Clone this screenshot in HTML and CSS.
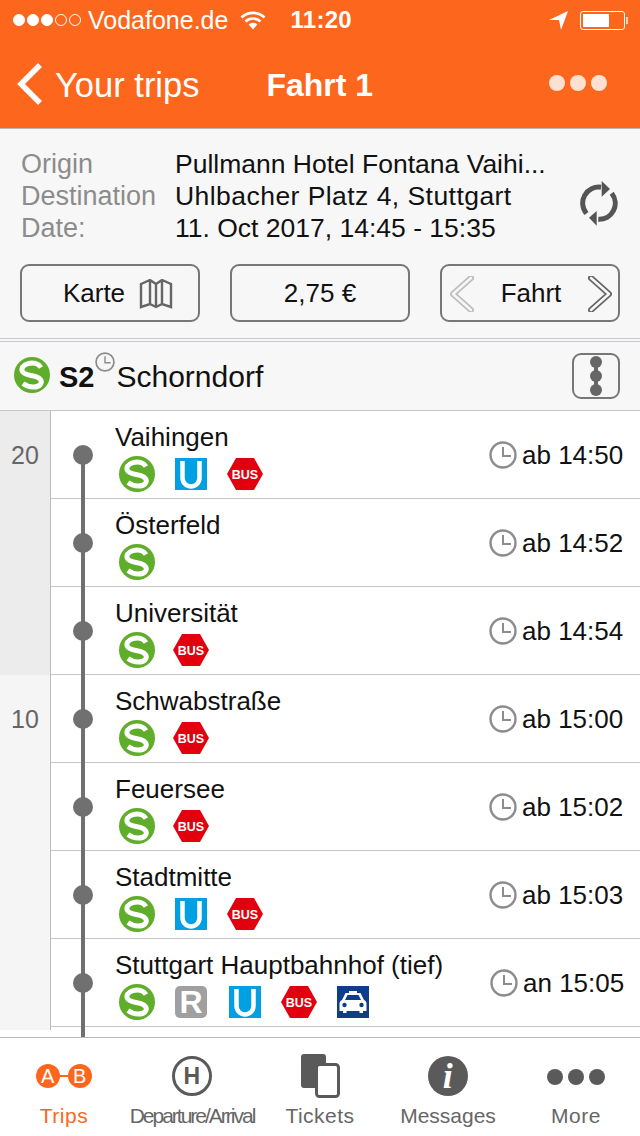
FILE: index.html
```html
<!DOCTYPE html>
<html lang="en">
<head>
    <meta charset="UTF-8">
    <meta name="viewport" content="width=device-width, initial-scale=1.0">
    <title>Fahrt 1</title>
    <link rel="stylesheet" href="styles.css">
</head>
<body>
    <svg class="defs" width="0" height="0">
        <symbol id="i-sbahn" viewBox="0 0 36 36">
            <circle cx="18" cy="18" r="18" fill="#5fad2a"/>
            <path d="M27 10.5C24.5 6.5 19 5.2 14 6.6C9 8 6.8 11.5 8.5 14.6C10.4 18 17 18 22 19.6C26.5 21 28.5 24 26.5 27.2C24 30.8 15.5 31.5 9 26.6" fill="none" stroke="#fff" stroke-width="5"/>
        </symbol>
        <symbol id="i-ubahn" viewBox="0 0 32 32">
            <rect width="32" height="32" fill="#00a0e3"/>
            <path d="M7.5 0V17a8.5 8.5 0 0 0 17 0V0" fill="none" stroke="#fff" stroke-width="4.5" transform="translate(0 3)"/>
        </symbol>
        <symbol id="i-bus" viewBox="0 0 36 32">
            <path d="M9 0H27L36 16L27 32H9L0 16Z" fill="#e2000f"/>
            <text x="18" y="21" class="bus-text">BUS</text>
        </symbol>
        <symbol id="i-rbahn" viewBox="0 0 32 32">
            <rect width="32" height="32" rx="5" fill="#a0a0a0"/>
            <text x="16" y="27" class="rail-text">R</text>
        </symbol>
        <symbol id="i-taxi" viewBox="0 0 32 32">
            <rect width="32" height="32" fill="#0f3d8c"/>
            <path d="M12 5H20V7H23.5L27 14C29 15 29.5 16 29.5 18V25H26V27H22.5V25H9.5V27H6V25H2.5V18C2.5 16 3 15 5 14L8.5 7H12Z" fill="#fff"/>
            <path d="M10.5 9H21.5L24 14H8Z" fill="#0f3d8c"/>
            <circle cx="7.5" cy="19" r="2.2" fill="#0f3d8c"/>
            <circle cx="24.5" cy="19" r="2.2" fill="#0f3d8c"/>
        </symbol>
        <symbol id="i-clock" viewBox="0 0 28 28">
            <circle cx="14" cy="14" r="12.5" fill="none" stroke="#8c8c8c" stroke-width="2.4"/>
            <path d="M14 6V15H22" fill="none" stroke="#8c8c8c" stroke-width="2"/>
        </symbol>
    </svg>

    <div class="page">
        <header class="topbar">
            <div class="status">
                <div class="signal">
                    <i class="on"></i><i class="on"></i><i class="on"></i><i></i><i></i>
                </div>
                <span class="carrier">Vodafone.de</span>
                <svg class="wifi" width="26" height="20" viewBox="0 0 26 20">
                    <path d="M1.5 7.5a16.5 16.5 0 0 1 23 0M5.5 11.500a11 11 0 0 1 15 0" fill="none" stroke="#fff" stroke-width="2.6"/>
                    <path d="M8.7 14.6a6 6 0 0 1 8.6 0L13 19.500Z" fill="#fff"/>
                </svg>
                <span class="clock-now">11:20</span>
                <svg class="arrow" width="19" height="19" viewBox="0 0 19 19">
                    <path d="M0 9L19 0L12 19L10 9Z" fill="#fff"/>
                </svg>
                <div class="battery"><div class="battery-fill"></div></div>
                <div class="battery-nub"></div>
            </div>
            <nav class="navbar">
                <svg class="back" width="27" height="44" viewBox="0 0 27 44">
                    <path d="M24 3L5 22L24 41" fill="none" stroke="#fff" stroke-width="5.5"/>
                </svg>
                <span class="back-label">Your trips</span>
                <span class="nav-title">Fahrt 1</span>
                <div class="nav-dots"><i></i><i></i><i></i></div>
            </nav>
        </header>

        <section class="summary">
            <div class="summary-top">
                <dl class="details">
                    <dt>Origin</dt>
                    <dd>Pullmann Hotel Fontana Vaihi...</dd>
                    <dt>Destination</dt>
                    <dd class="dd-wide">Uhlbacher Platz 4, Stuttgart</dd>
                    <dt>Date:</dt>
                    <dd>11. Oct 2017, 14:45 - 15:35</dd>
                </dl>
                <svg class="refresh" width="40" height="46" viewBox="0 0 40 46">
                    <path d="M6.500 32.500A16 16 0 0 1 21 6.300M31.700 12.300A16 16 0 0 1 18.300 38.300" fill="none" stroke="#555" stroke-width="5"/>
                    <path d="M21.700 0L30 8L21.700 15.700Z" fill="#555"/>
                    <path d="M16.700 30L9 36.700L16.700 44.700Z" fill="#555"/>
                </svg>
            </div>
            <div class="actions">
                <button class="btn btn-map">
                    <span>Karte</span>
                    <svg class="map" width="34" height="30" viewBox="0 0 34 30">
                        <path d="M2 5L11 1L17 5L23 1L32 5V28L23 25L17 28L11 25L2 28ZM11 1V25M17 5V28M23 1V25" fill="none" stroke="#666" stroke-width="2.400"/>
                    </svg>
                </button>
                <button class="btn">2,75 €</button>
                <button class="btn btn-pager">
                    <svg width="24" height="36" viewBox="0 0 24 36">
                        <path d="M21 2L3 18L21 34" fill="none" stroke="#bdbdbd" stroke-width="6" stroke-linejoin="round" stroke-linecap="round"/>
                        <path d="M21 2L3 18L21 34" fill="none" stroke="#f7f7f7" stroke-width="2.500" stroke-linejoin="round" stroke-linecap="round"/>
                    </svg>
                    <span>Fahrt</span>
                    <svg width="24" height="36" viewBox="0 0 24 36">
                        <path d="M3 2L21 18L3 34" fill="none" stroke="#666" stroke-width="6" stroke-linejoin="round" stroke-linecap="round"/>
                        <path d="M3 2L21 18L3 34" fill="none" stroke="#f7f7f7" stroke-width="2.500" stroke-linejoin="round" stroke-linecap="round"/>
                    </svg>
                </button>
            </div>
        </section>

        <section class="line-head">
            <svg class="line-badge" width="36" height="36"><use href="#i-sbahn"/></svg>
            <span class="line-name">S2</span>
            <svg class="line-clock" width="20" height="20"><use href="#i-clock"/></svg>
            <span class="line-dest">Schorndorf</span>
            <button class="stops-btn">
                <i></i><i></i><i></i>
            </button>
        </section>

        <main class="stops">
            <div class="stop">
                <div class="band band-dark"><span>20</span></div>
                <div class="track"><i></i></div>
                <div class="stop-info">
                    <div class="stop-name">Vaihingen</div>
                    <div class="modes">
                        <svg class="mode"><use href="#i-sbahn"/></svg>
                        <svg class="mode"><use href="#i-ubahn" width="32" height="32" x="2" y="2"/></svg>
                        <svg class="mode"><use href="#i-bus" y="2" height="32" width="36"/></svg>
                    </div>
                </div>
                <div class="time"><svg width="28" height="28"><use href="#i-clock"/></svg><span>ab 14:50</span></div>
            </div>
            <div class="stop">
                <div class="band band-dark"></div>
                <div class="track"><i></i></div>
                <div class="stop-info">
                    <div class="stop-name">Österfeld</div>
                    <div class="modes">
                        <svg class="mode"><use href="#i-sbahn"/></svg>
                    </div>
                </div>
                <div class="time"><svg width="28" height="28"><use href="#i-clock"/></svg><span>ab 14:52</span></div>
            </div>
            <div class="stop">
                <div class="band band-dark"></div>
                <div class="track"><i></i></div>
                <div class="stop-info">
                    <div class="stop-name">Universität</div>
                    <div class="modes">
                        <svg class="mode"><use href="#i-sbahn"/></svg>
                        <svg class="mode"><use href="#i-bus" y="2" height="32" width="36"/></svg>
                    </div>
                </div>
                <div class="time"><svg width="28" height="28"><use href="#i-clock"/></svg><span>ab 14:54</span></div>
            </div>
            <div class="stop">
                <div class="band"><span>10</span></div>
                <div class="track"><i></i></div>
                <div class="stop-info">
                    <div class="stop-name">Schwabstraße</div>
                    <div class="modes">
                        <svg class="mode"><use href="#i-sbahn"/></svg>
                        <svg class="mode"><use href="#i-bus" y="2" height="32" width="36"/></svg>
                    </div>
                </div>
                <div class="time"><svg width="28" height="28"><use href="#i-clock"/></svg><span>ab 15:00</span></div>
            </div>
            <div class="stop">
                <div class="band"></div>
                <div class="track"><i></i></div>
                <div class="stop-info">
                    <div class="stop-name">Feuersee</div>
                    <div class="modes">
                        <svg class="mode"><use href="#i-sbahn"/></svg>
                        <svg class="mode"><use href="#i-bus" y="2" height="32" width="36"/></svg>
                    </div>
                </div>
                <div class="time"><svg width="28" height="28"><use href="#i-clock"/></svg><span>ab 15:02</span></div>
            </div>
            <div class="stop">
                <div class="band"></div>
                <div class="track"><i></i></div>
                <div class="stop-info">
                    <div class="stop-name">Stadtmitte</div>
                    <div class="modes">
                        <svg class="mode"><use href="#i-sbahn"/></svg>
                        <svg class="mode"><use href="#i-ubahn" width="32" height="32" x="2" y="2"/></svg>
                        <svg class="mode"><use href="#i-bus" y="2" height="32" width="36"/></svg>
                    </div>
                </div>
                <div class="time"><svg width="28" height="28"><use href="#i-clock"/></svg><span>ab 15:03</span></div>
            </div>
            <div class="stop">
                <div class="band"></div>
                <div class="track"><i></i></div>
                <div class="stop-info">
                    <div class="stop-name">Stuttgart Hauptbahnhof (tief)</div>
                    <div class="modes">
                        <svg class="mode"><use href="#i-sbahn"/></svg>
                        <svg class="mode"><use href="#i-rbahn" width="32" height="32" x="2" y="2"/></svg>
                        <svg class="mode"><use href="#i-ubahn" width="32" height="32" x="2" y="2"/></svg>
                        <svg class="mode"><use href="#i-bus" y="2" height="32" width="36"/></svg>
                        <svg class="mode"><use href="#i-taxi" width="32" height="32" x="2" y="2"/></svg>
                    </div>
                </div>
                <div class="time time-arrive"><svg width="28" height="28"><use href="#i-clock"/></svg><span>an 15:05</span></div>
            </div>
            <div class="stop stop-tail">
                <div class="band band-tail"></div>
                <div class="track"></div>
            </div>
        </main>

        <footer class="tabs">
            <div class="tab tab-active">
                <svg width="60" height="40" viewBox="0 0 60 40">
                    <path d="M14 20H46" stroke="#fc671d" stroke-width="2"/>
                    <circle cx="14" cy="20" r="12" fill="#fc671d"/>
                    <circle cx="46" cy="20" r="12" fill="#fc671d"/>
                    <text x="14" y="27" class="ab-text">A</text>
                    <text x="46" y="27" class="ab-text">B</text>
                </svg>
                <span>Trips</span>
            </div>
            <div class="tab">
                <svg width="42" height="40" viewBox="0 0 42 40">
                    <circle cx="21" cy="20" r="18.500" fill="none" stroke="#5a5a5a" stroke-width="3"/>
                    <text x="21" y="28" class="h-text">H</text>
                </svg>
                <span class="tab-tight">Departure/Arrival</span>
            </div>
            <div class="tab">
                <svg class="tickets" width="40" height="44" viewBox="0 0 40 44">
                    <rect x="1" y="0" width="25" height="34" rx="3" fill="#5a5a5a"/>
                    <rect x="16.500" y="10.500" width="22" height="32" rx="3" fill="#fff" stroke="#5a5a5a" stroke-width="3"/>
                </svg>
                <span>Tickets</span>
            </div>
            <div class="tab">
                <svg width="40" height="40" viewBox="0 0 40 40">
                    <circle cx="20" cy="20" r="20" fill="#5a5a5a"/>
                    <text x="20" y="32" class="info-text">i</text>
                </svg>
                <span class="tab-snug">Messages</span>
            </div>
            <div class="tab">
                <div class="more-dots"><i></i><i></i><i></i></div>
                <span>More</span>
            </div>
        </footer>
    </div>
</body>
</html>
```

FILE: styles.css
```css
* {
    box-sizing: border-box;
}

body {
    margin: 0;
    font-family: "Liberation Sans", Arial, sans-serif;
    color: #111;
    background: #fff;
}

.defs {
    display: none;
}

.page {
    width: 640px;
    height: 1136px;
    display: flex;
    flex-direction: column;
    overflow: hidden;
}

/* Orange header */
.topbar {
    height: 129px;
    flex: none;
    background-color: #fc671d;
    border-bottom: 1px solid #b5b5b5;
    color: #fff;
}

.status {
    height: 40px;
    display: flex;
    align-items: center;
    padding-left: 13px;
    font-size: 24px;
}

.signal {
    display: flex;
    gap: 2px;
}

.signal i {
    width: 12px;
    height: 12px;
    border: 1px solid #fff;
    border-radius: 50%;
}

.signal i.on {
    background-color: #fff;
}

.carrier {
    margin-left: 7px;
    font-size: 25px;
}

.wifi {
    margin-left: 12px;
}

.clock-now {
    margin-left: 24px;
    font-size: 24px;
    font-weight: bold;
    letter-spacing: 0.3px;
}

.arrow {
    margin-left: 197px;
}

.battery {
    margin-left: 12px;
    width: 45px;
    height: 19px;
    padding: 2px;
    border: 1px solid #fff;
    border-radius: 3px;
}

.battery-fill {
    width: 26px;
    height: 100%;
    background-color: #fff;
}

.battery-nub {
    width: 2px;
    height: 7px;
    margin-left: 1px;
    background-color: #fff;
    opacity: 0.7;
}

.navbar {
    height: 88px;
    display: flex;
    align-items: center;
    padding-left: 16px;
}

.back-label {
    margin-left: 12px;
    font-size: 34.500px;
    margin-top: 2px;
}

.nav-title {
    margin-left: 67px;
    font-size: 32px;
    font-weight: bold;
    margin-top: 2px;
}

.nav-dots {
    margin-left: auto;
    margin-right: 33px;
    display: flex;
    gap: 5px;
    margin-top: -2px;
}

.nav-dots i {
    width: 16px;
    height: 16px;
    border-radius: 50%;
    background-color: #fff;
    opacity: 0.8;
}

/* Trip summary */
.summary {
    height: 213px;
    flex: none;
    padding: 19px 20px 0 21px;
    background-color: #f7f7f7;
    border-bottom: 4px double #c6c6cb;
}

.summary-top {
    display: flex;
    align-items: flex-start;
    justify-content: space-between;
}

.details {
    margin: 0;
    display: grid;
    grid-template-columns: 154px auto;
    font-size: 26.500px;
    line-height: 32px;
}

.details dt {
    font-size: 27px;
    color: #8c8c8c;
}

.details dd {
    margin: 0;
    color: #111;
}

.details .dd-wide {
    letter-spacing: 0.45px;
}

.refresh {
    margin-top: 33px;
}

.actions {
    margin-top: 20px;
    display: flex;
    justify-content: space-between;
    margin-left: -1px;
}

.btn {
    width: 180px;
    height: 58px;
    display: flex;
    align-items: center;
    justify-content: center;
    gap: 14px;
    padding: 1px 0 0;
    background: #f7f7f7;
    border: 2px solid #777;
    border-radius: 9px;
    font-family: inherit;
    font-size: 26px;
    color: #111;
}

.btn-map {
    padding-left: 16px;
}

.btn-pager {
    justify-content: space-between;
    padding: 1px 6px 0 8px;
}

/* Line heading */
.line-head {
    height: 69px;
    flex: none;
    display: flex;
    align-items: center;
    padding: 0 20px 0 14px;
    background-color: #f7f7f7;
    border-bottom: 1px solid #c6c6c6;
}

.line-badge {
    margin-top: -2px;
}

.line-name {
    margin-left: 9px;
    margin-top: 2px;
    font-size: 29px;
    font-weight: bold;
}

.line-clock {
    margin: -28px 1px 0 1px;
}

.line-dest {
    margin-top: 2px;
    font-size: 30px;
}

.stops-btn {
    margin-left: auto;
    width: 48px;
    height: 46px;
    display: flex;
    flex-direction: column;
    align-items: center;
    justify-content: center;
    gap: 2px;
    padding: 0;
    background: transparent;
    border: 2px solid #777;
    border-radius: 9px;
}

.stops-btn i {
    position: relative;
    width: 12px;
    height: 12px;
    border-radius: 50%;
    background-color: #666;
}

.stops-btn i + i::before {
    content: "";
    position: absolute;
    left: 4px;
    top: -4px;
    width: 4px;
    height: 6px;
    background-color: #666;
}

/* Stop list */
.stops {
    flex: 1;
    overflow: hidden;
    background-color: #fff;
}

.stop {
    height: 88px;
    display: flex;
}

.stop-tail {
    height: 10px;
}

.band {
    width: 51px;
    flex: none;
    padding-top: 30px;
    text-align: center;
    font-size: 25px;
    line-height: 28px;
    color: #666;
    background-color: #f5f5f5;
    border-right: 1px solid #bbb;
}

.band-dark {
    background-color: #ececec;
}

.band-tail {
    height: 3px;
    padding: 0;
}

.stop:not(.stop-tail) .stop-info,
.stop:not(.stop-tail) .time,
.stop:not(.stop-tail) .track {
    border-bottom: 1px solid #c8c8c8;
}

.track {
    width: 64px;
    flex: none;
    position: relative;
}

.track::before {
    content: "";
    position: absolute;
    left: 30px;
    top: 0;
    bottom: -1px;
    width: 4px;
    background-color: #707070;
}

.stop:first-child .track::before {
    top: 44px;
}

.track i {
    position: absolute;
    left: 22px;
    top: 34px;
    width: 20px;
    height: 20px;
    border-radius: 50%;
    background-color: #707070;
}

.stop-info {
    flex: 1;
    padding-top: 11px;
    min-width: 0;
}

.stop-name {
    font-size: 26px;
    line-height: 30px;
    white-space: nowrap;
}

.modes {
    display: flex;
    gap: 18px;
    margin-left: 4px;
    margin-top: 4px;
}

.mode {
    width: 36px;
    height: 36px;
}

.time {
    width: 151px;
    flex: none;
    display: flex;
    align-items: center;
    gap: 5px;
    font-size: 26px;
    white-space: nowrap;
}

.time span {
    margin-top: 2px;
}

.time-arrive {
    padding-left: 1px;
}

/* Bottom tabs */
.tabs {
    height: 99px;
    flex: none;
    display: grid;
    grid-template-columns: repeat(5, 128px);
    background-color: #fff;
    border-top: 1px solid #b8b8b8;
}

.tab {
    position: relative;
    display: flex;
    flex-direction: column;
    align-items: center;
    height: 98px;
    padding-top: 18px;
    font-size: 21px;
    letter-spacing: 0.5px;
    color: #666;
}

.tab svg {
    flex: none;
}

.tab span {
    position: absolute;
    top: 66px;
    white-space: nowrap;
}

.tab-active {
    color: #fc671d;
}

.tab .tab-tight {
    letter-spacing: -2px;
}

.tab .tab-snug {
    letter-spacing: 0;
}

.tab .tickets {
    margin-top: -2px;
}

.more-dots {
    margin-top: 13px;
    display: flex;
    gap: 5px;
}

.more-dots i {
    width: 16px;
    height: 16px;
    border-radius: 50%;
    background-color: #5a5a5a;
}

/* Text inside icons */
.bus-text {
    font-size: 12.500px;
    font-weight: bold;
    fill: #fff;
    text-anchor: middle;
}

.rail-text {
    font-size: 32px;
    font-weight: bold;
    fill: #fff;
    text-anchor: middle;
}

.ab-text {
    font-size: 20px;
    fill: #fff;
    text-anchor: middle;
}

.h-text {
    font-size: 23px;
    font-weight: bold;
    fill: #5a5a5a;
    text-anchor: middle;
}

.info-text {
    font-family: "Liberation Serif", serif;
    font-size: 36px;
    font-style: italic;
    font-weight: bold;
    fill: #fff;
    text-anchor: middle;
}
```
